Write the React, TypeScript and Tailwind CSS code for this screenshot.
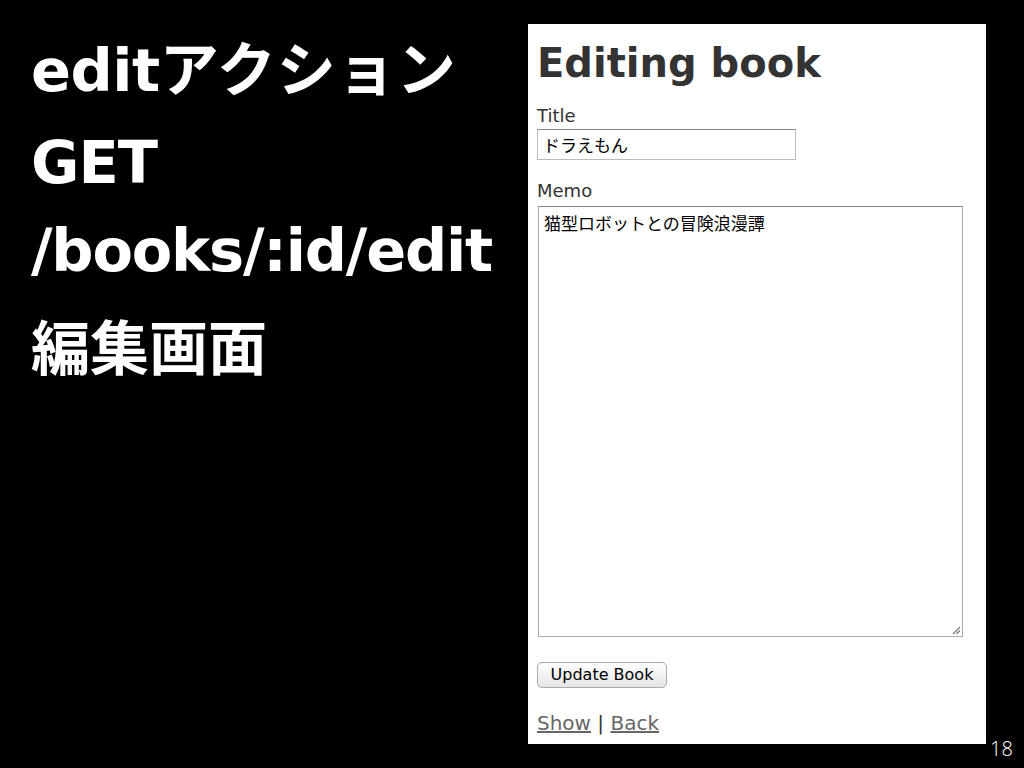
import React from "react";

export default function App() {
  const big = { fontFamily: '"DejaVu Sans", "Noto Sans CJK JP", sans-serif' };
  const jp = { fontFamily: '"Noto Sans CJK JP", "Noto Sans", sans-serif' };
  const web = { fontFamily: '"DejaVu Sans", "Noto Sans CJK JP", sans-serif' };
  return (
    <div className="w-[1024px] h-[768px] bg-black flex overflow-hidden">
      <div className="w-[528px] pl-[31px] pt-[21px] flex flex-col text-white font-bold text-[59px]" style={big}>
        <div className="h-[97px] leading-[90px] tracking-[-0.5px]">edit<span className="tracking-[1px]" style={jp}>アクション</span></div>
        <div className="h-[88px] leading-[90px] tracking-[-1px]">GET</div>
        <div className="h-[94px] leading-[90px] tracking-[-1.2px]">/books/:id/edit</div>
        <div className="h-[90px] leading-[90px]" style={jp}>編集画面</div>
      </div>
      <div className="mt-[24px] w-[458px] h-[720px] bg-white pl-[9px] pt-[15px] text-[#333]" style={web}>
        <h1 className="text-[40px] font-bold leading-[48px]">Editing book</h1>
        <div className="mt-[18px] text-[18px] leading-[22px]">Title</div>
        <div className="mt-[2px] w-[259px] h-[31px] border border-[#bbb] border-t-[#888] px-[5px] flex items-center text-[17px] text-black" style={jp}>ドラえもん</div>
        <div className="mt-[20px] text-[18px] leading-[22px]">Memo</div>
        <div className="mt-[4px] ml-[1px] w-[425px] h-[431px] border border-[#aaa] border-t-[#888] relative px-[5px] pt-[5px] text-[17px] leading-[22px] text-black" style={jp}>
          猫型ロボットとの冒険浪漫譚
          <svg className="absolute right-[1px] bottom-[1px]" width="10" height="10" viewBox="0 0 10 10">
            <path d="M9 2 L2 9 M9 5.5 L5.5 9" stroke="#777" strokeWidth="1.2" />
          </svg>
        </div>
        <div className="mt-[25px] w-[130px] h-[26px] rounded-[5px] border border-[#aaa] bg-gradient-to-b from-white to-[#e4e4e4] flex items-center justify-center text-[16px] leading-[20px] text-black" style={web}>
          Update Book
        </div>
        <div className="mt-[23px] text-[20px] leading-[24px] text-[#666]">
          <span className="underline">Show</span>
          <span className="text-[#333]"> | </span>
          <span className="underline">Back</span>
        </div>
      </div>
      <div className="flex-1 flex flex-col justify-end pb-[8px] pl-[4px]">
        <div className="text-white text-[20px] leading-[22px] font-extralight" style={{ fontFamily: '"Open Sans", sans-serif' }}>18</div>
      </div>
    </div>
  );
}
